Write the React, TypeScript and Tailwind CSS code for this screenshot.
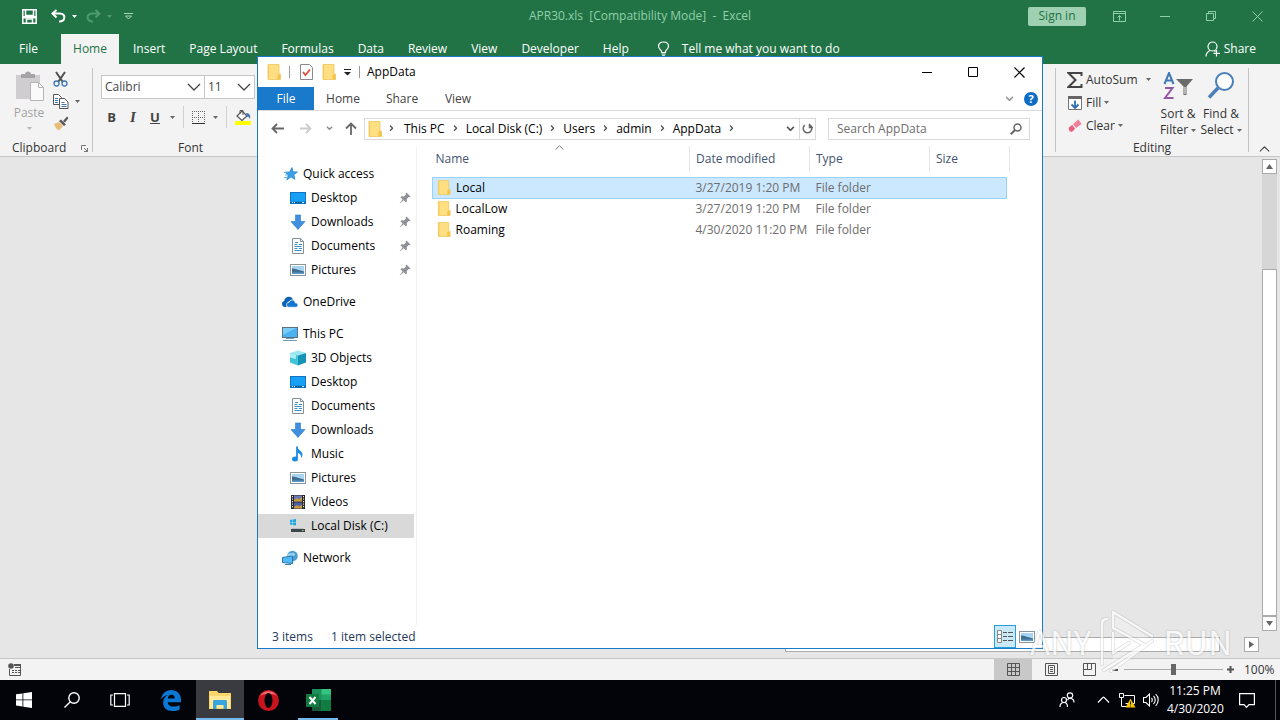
import type { ReactNode } from 'react';

type IconProps = { className?: string };

function Caret({ className = 'text-[#666]' }: IconProps) {
	return (
		<svg width="5" height="3" viewBox="0 0 5 3" className={`shrink-0 ${className}`} fill="currentColor">
			<path d="M0 0h5L2.5 3z" />
		</svg>
	);
}

function Chevron({ className = '' }: IconProps) {
	return (
		<svg viewBox="0 0 14 8" className={`shrink-0 ${className}`} fill="none" stroke="currentColor" strokeWidth="1.3">
			<path d="M1 1l6 6 6-6" />
		</svg>
	);
}

function SmallChevron({ className = '' }: IconProps) {
	return (
		<svg viewBox="0 0 8 5" className={`shrink-0 ${className}`} fill="none" stroke="currentColor" strokeWidth="1.5">
			<path d="M1 .8l3 3 3-3" />
		</svg>
	);
}

function FolderIcon({ className = 'h-4 w-[14px]' }: IconProps) {
	return (
		<svg viewBox="0 0 14 16" className={`shrink-0 ${className}`}>
			<path d="M1 .5h11V10h1.5v5.5H1z" fill="#ffdf82" />
			<path d="M1 .5h1.2v15H1z" fill="#f5cf62" />
			<path d="M10.5 10.5h2.8v5h-2.8z" fill="#f3c445" />
			<path d="M1 .5h11V10h1.5v5.5H1z" fill="none" stroke="#efc75c" strokeWidth=".8" />
		</svg>
	);
}

function StarIcon() {
	return (
		<svg width="16" height="16" viewBox="0 0 16 16">
			<path d="M10 1.5l1 4.3 4.5.2-3.6 2.6 1 4.7L9 10.900l-4.200 3 1.500-4.900L3 6.200l4.500-.2z" fill="#3aa0e8" stroke="#1c7fd0" strokeWidth=".7" />
			<path d="M2 6.5h3M3 9h3M2 11.5h4" stroke="#57b5ef" />
		</svg>
	);
}

function DesktopIcon() {
	return (
		<svg width="16" height="16" viewBox="0 0 16 16">
			<rect x=".5" y="2.5" width="15" height="11" fill="#18a0f5" stroke="#1474c4" />
			<path d="M1 12.5h14" stroke="#0d5c9e" strokeWidth="1.4" />
			<path d="M2 12.5h1M4 12.5h1M12 12.5h2" stroke="#cfeaff" />
		</svg>
	);
}

function DownloadIcon() {
	return (
		<svg width="16" height="16" viewBox="0 0 16 16">
			<path d="M5.5 1h5v6.5H15l-7 8-7-8h4.5z" fill="#3d8fe0" stroke="#2b75c4" strokeWidth=".6" />
		</svg>
	);
}

function DocumentIcon() {
	return (
		<svg width="16" height="16" viewBox="0 0 16 16">
			<path d="M2.5.5h8l3 3v12h-11z" fill="#fff" stroke="#85909b" />
			<path d="M10.5.5v3h3" fill="none" stroke="#85909b" />
			<path d="M4.5 6.5h3M4.5 8.5h7M4.5 10.5h3M9 10.5h3M4.5 12.5h7M5 4.5h3M9 6.5h3" stroke="#3b8fd0" />
		</svg>
	);
}

function PictureIcon() {
	return (
		<svg width="16" height="16" viewBox="0 0 16 16" className="shrink-0">
			<rect x=".5" y="2.5" width="15" height="11" fill="#fff" stroke="#8b949d" />
			<rect x="2" y="4" width="12" height="8" fill="#a9d3f2" />
			<path d="M2 6.5c3 0 5 1 12 3V12H2z" fill="#3e6f8f" />
			<path d="M2 10.5h12V12H2z" fill="#5e99c9" />
		</svg>
	);
}

function CloudIcon() {
	return (
		<svg width="16" height="16" viewBox="0 0 16 16">
			<path d="M0 9.8C0 8 1.2 7.200 2.300 7.100 2.300 4.400 4.600 2.800 7 2.800c2 0 3.500 1.200 4 2.700L6 8l-1.500 5H3c-2 0-3-1.500-3-3.200z" fill="#0b63b6" />
			<path d="M4.500 10.700c0-1.700 1.400-2.600 2.600-2.500C8 6 10 5.500 11.300 6.100c1.400.6 1.900 1.900 1.900 2.700 1.700 0 2.800 1 2.800 2.200 0 1.300-1 2.300-2.300 2.300H7c-1.500 0-2.500-1.100-2.500-2.600z" fill="#1277d0" stroke="#fff" strokeWidth=".8" />
		</svg>
	);
}

function ComputerIcon() {
	return (
		<svg width="16" height="16" viewBox="0 0 16 16">
			<rect x=".5" y="1.5" width="15" height="10" fill="#4ab2f1" stroke="#5a7184" />
			<path d="M1 2h13L1 9z" fill="#79cbf8" />
			<path d="M4 12.5h8M1 14.5h14" stroke="#6e98b6" />
		</svg>
	);
}

function CubeIcon() {
	return (
		<svg width="16" height="16" viewBox="0 0 16 16">
			<path d="M0 3L8 .5 16 3 8 5.5z" fill="#9be8f1" />
			<path d="M0 3l8 2.5v10l-8-3z" fill="#43c3d8" />
			<path d="M8 5.5L16 3v9.500l-8 3z" fill="#1593b5" />
			<path d="M0 3l6 2v4L0 7.5z" fill="#a6edf4" />
		</svg>
	);
}

function MusicIcon() {
	return (
		<svg width="16" height="16" viewBox="0 0 16 16">
			<path d="M7 .5v12" stroke="#1d8be0" strokeWidth="1.8" />
			<path d="M7 .5c.5 3.5 6 4.5 5.5 8.5-.2 1.700-1 2.500-1.500 3 .5-3.500-1.500-4.500-4-5.500z" fill="#1d8be0" />
			<ellipse cx="5" cy="13" rx="3" ry="2.5" fill="#1d8be0" />
		</svg>
	);
}

function VideoIcon() {
	return (
		<svg width="16" height="16" viewBox="0 0 16 16">
			<rect x="1" y="1" width="14" height="14" fill="#2b2b2b" />
			<rect x="4" y="1.5" width="8" height="6" fill="#6b79b8" />
			<rect x="4" y="8.5" width="8" height="6" fill="#4d5fa8" />
			<path d="M4 6l3-2 2 1.5L12 3v4.500H4zM4 13l3-2 2 1.500 3-2v4H4z" fill="#c59a3a" />
			<path d="M2.500 2v12M13.500 2v12" stroke="#e8e8e8" strokeDasharray="1.2 1.3" />
		</svg>
	);
}

function DriveIcon() {
	return (
		<svg width="16" height="16" viewBox="0 0 16 16">
			<path d="M0 2l2.500-.4V4H0zM3 1.500L6 1v3H3zM0 4.500h2.500v2.400L0 6.500zM3 4.500h3v3L3 7z" fill="#19a9e0" />
			<path d="M2 10h11l1.500 1.500H1z" fill="#b9bec3" />
			<rect x="1" y="11" width="14" height="3" fill="#3f4549" />
			<rect x="12" y="12" width="1.5" height="1" fill="#62e06f" />
		</svg>
	);
}

function NetworkIcon() {
	return (
		<svg width="16" height="16" viewBox="0 0 16 16">
			<circle cx="10.5" cy="6" r="5.3" fill="#4f9bd0" />
			<path d="M7 3c2 1 3-1 5 0s1 3-1 3-2 3-4 2-2-4 0-5z" fill="#8fd0ec" />
			<path d="M.5 7.5l10-1.500v7.500l-10-1z" fill="#53b9f6" stroke="#2877b3" />
			<path d="M3 14.5h6" stroke="#3a80b0" />
		</svg>
	);
}

function PinIcon() {
	return (
		<svg width="12" height="12" viewBox="0 0 12 12" className="shrink-0" fill="#8d9297">
			<path d="M7.500 .5l4 4-1 .8-.8-.3L7.800 7l.1 2.500-.9.9-2.200-2.200L1 11.200l-.3-.3 3-3.500-2.200-2.200.9-.9 2.500.1 2-1.900-.3-.8z" />
		</svg>
	);
}

const excelTabs = ['Insert', 'Page Layout', 'Formulas', 'Data', 'Review', 'View', 'Developer', 'Help'];

const crumbs = ['This PC', 'Local Disk (C:)', 'Users', 'admin', 'AppData'];

const folders = [
	{ name: 'Local', date: '3/27/2019 1:20 PM', selected: true },
	{ name: 'LocalLow', date: '3/27/2019 1:20 PM', selected: false },
	{ name: 'Roaming', date: '4/30/2020 11:20 PM', selected: false },
];

type NavItem = { label: string; icon: ReactNode; pinned?: boolean; selected?: boolean };

const navGroups: { root: NavItem; items: NavItem[] }[] = [
	{
		root: { label: 'Quick access', icon: <StarIcon /> },
		items: [
			{ label: 'Desktop', icon: <DesktopIcon />, pinned: true },
			{ label: 'Downloads', icon: <DownloadIcon />, pinned: true },
			{ label: 'Documents', icon: <DocumentIcon />, pinned: true },
			{ label: 'Pictures', icon: <PictureIcon />, pinned: true },
		],
	},
	{ root: { label: 'OneDrive', icon: <CloudIcon /> }, items: [] },
	{
		root: { label: 'This PC', icon: <ComputerIcon /> },
		items: [
			{ label: '3D Objects', icon: <CubeIcon /> },
			{ label: 'Desktop', icon: <DesktopIcon /> },
			{ label: 'Documents', icon: <DocumentIcon /> },
			{ label: 'Downloads', icon: <DownloadIcon /> },
			{ label: 'Music', icon: <MusicIcon /> },
			{ label: 'Pictures', icon: <PictureIcon /> },
			{ label: 'Videos', icon: <VideoIcon /> },
			{ label: 'Local Disk (C:)', icon: <DriveIcon />, selected: true },
		],
	},
	{ root: { label: 'Network', icon: <NetworkIcon /> }, items: [] },
];

function ExcelTitleBar() {
	return (
		<header className="flex h-8 items-center text-[#8fd0a8]">
			<div className="flex flex-1 items-center text-white">
				<button aria-label="Save" className="ml-[22px]">
					<svg width="15" height="15" viewBox="0 0 15 15" fill="none" stroke="currentColor" strokeWidth="1.5">
						<path d="M.8.8h13.400v13.400H.8zM3.500 1v5.500h8V1M4.500 14v-4h6v4" />
						<path d="M1 7h13v2.500H1z" fill="currentColor" stroke="none" />
					</svg>
				</button>
				<button aria-label="Undo" className="ml-[14px] flex items-center gap-[6px]">
					<svg width="15" height="14" viewBox="0 0 15 14" fill="none" stroke="currentColor" strokeWidth="2">
						<path d="M5.500 1l-4 3.500 4 4M1.500 4.500H9c6 0 6 8-1 8" />
					</svg>
					<Caret className="text-white" />
				</button>
				<button aria-label="Redo" className="ml-[9px] flex items-center gap-[6px] text-[#4f9a70]">
					<svg width="15" height="14" viewBox="0 0 15 14" fill="none" stroke="currentColor" strokeWidth="2">
						<path d="M9.500 1l4 3.500-4 4M13.500 4.500H6c-6 0-6 8 1 8" />
					</svg>
					<Caret className="text-[#4f9a70]" />
				</button>
				<button aria-label="Customize Quick Access Toolbar" className="ml-3">
					<svg width="9" height="7" viewBox="0 0 9 7" fill="none" stroke="#a7d5b8">
						<path d="M0 .5h9M1.500 3l3 3 3-3z" />
					</svg>
				</button>
			</div>
			<h1 className="whitespace-pre">APR30.xls  [Compatibility Mode]  -  Excel</h1>
			<div className="flex flex-1 items-center justify-end">
				<button className="mr-[10px] h-[19px] w-[58px] rounded-xs bg-[#9fd0b1] text-[#217346]">Sign in</button>
				<button aria-label="Ribbon Display Options" className="grid h-8 w-[46px] place-items-center">
					<svg width="13" height="11" viewBox="0 0 13 11" fill="none" stroke="currentColor">
						<path d="M.5.5h12v10H.5zM.5 2.500h12M6.500 9.500v-5M4.500 6.500l2-2 2 2" />
					</svg>
				</button>
				<button aria-label="Minimize Excel" className="grid h-8 w-[46px] place-items-center">
					<svg width="10" height="1" viewBox="0 0 10 1"><path d="M0 0h10v1H0z" fill="currentColor" /></svg>
				</button>
				<button aria-label="Restore Excel" className="grid h-8 w-[46px] place-items-center">
					<svg width="10" height="10" viewBox="0 0 10 10" fill="none" stroke="currentColor">
						<path d="M.5 2.500h7v7h-7zM2.500 2.500v-2h7v7h-2" />
					</svg>
				</button>
				<button aria-label="Close Excel" className="grid h-8 w-[46px] place-items-center">
					<svg width="11" height="11" viewBox="0 0 11 11" stroke="currentColor"><path d="M.5.5l10 10M10.500.5l-10 10" /></svg>
				</button>
			</div>
		</header>
	);
}

function ExcelTabs() {
	return (
		<nav className="flex h-8 items-end text-white *:h-[30px]">
			<button className="w-[61px] pr-1">File</button>
			<button className="mr-[2px] w-[58px] bg-[#f3f3f3] text-[#217346]">Home</button>
			{excelTabs.map((tab) => (
				<button key={tab} className="px-3">{tab}</button>
			))}
			<button className="ml-4 flex items-center gap-3">
				<svg width="13" height="16" viewBox="0 0 13 16" fill="none" stroke="currentColor" strokeWidth="1.2">
					<path d="M4.500 11.500V10c-1.500-1.500-3-2.500-3-4.800C1.500 2.500 3.700 1 6.500 1s5 1.500 5 4.200c0 2.300-1.500 3.300-3 4.800v1.500zM4.500 13h4M5 14.800h3" />
				</svg>
				Tell me what you want to do
			</button>
			<button className="ml-auto flex items-center gap-[3px] pr-6">
				<svg width="16" height="16" viewBox="0 0 16 16" fill="none" stroke="currentColor" strokeWidth="1.2">
					<circle cx="7.5" cy="5.5" r="4.5" />
					<path d="M1 15.500c0-3.500 2-5 4-6M9 9.500c1 .5 1.500 1 1.500 1M11.500 9v6.500M8.500 12.300h6.500" />
				</svg>
				Share
			</button>
		</nav>
	);
}

function ClipboardGroup() {
	return (
		<section className="flex w-[93px] flex-col border-r border-[#c3c3c3]">
			<div className="flex flex-1 gap-[7px] pl-3">
				<button className="flex w-[34px] flex-col items-center justify-start pt-[3px] text-[#a3a3a3]">
					<svg width="30" height="30" viewBox="0 0 30 30" className="shrink-0">
						<path d="M2 4h24v24H2z" fill="#cfcdd0" />
						<path d="M7 3h4c0-3.500 6-3.500 6 0h4v4H7z" fill="#a5a3a6" />
						<path d="M16.500 11.500h8l5 5v13h-13z" fill="#fafafa" stroke="#b5b5b5" />
						<path d="M24.500 11.500v5h5" fill="none" stroke="#b5b5b5" />
					</svg>
					<span className="mt-1 leading-4">Paste</span>
					<Caret className="mt-[6px] text-[#b5b5b5]" />
				</button>
				<div className="flex flex-col">
					<button aria-label="Cut" className="h-[22px]">
						<svg width="15" height="16" viewBox="0 0 15 16" fill="none">
							<path d="M3 1l6.500 9.500M12 1L5.500 10.500" stroke="#505050" strokeWidth="2" />
							<circle cx="3.5" cy="12.5" r="2.5" stroke="#3f78b5" strokeWidth="1.3" />
							<circle cx="11.5" cy="12.5" r="2.5" stroke="#3f78b5" strokeWidth="1.3" />
						</svg>
					</button>
					<button aria-label="Copy" className="flex h-[22px] items-center gap-[6px]">
						<svg width="16" height="15" viewBox="0 0 16 15" fill="#fff" stroke="#555">
							<path d="M.5.5h5l3 3v7h-8z" />
							<path d="M6.500 4.500h5L15 8v6.500H6.500z" />
							<path d="M2 4.500h3M2 6.500h3M2 8.500h3M8.500 8.500h3M8.500 10.500h5M8.500 12.500h5" stroke="#3f78b5" />
						</svg>
						<Caret />
					</button>
					<button aria-label="Format Painter" className="h-[23px]">
						<svg width="16" height="15" viewBox="0 0 16 15">
							<path d="M1 8l5-2 4 4-4 4.500C4 13.500 2 11.500 1 8z" fill="#e8bd7a" />
							<path d="M6 5l2-1.500 5 5L11 10zM10 5l4-4.500L15.500 2 12 6.500z" fill="#595959" />
						</svg>
					</button>
				</div>
			</div>
			<div className="flex h-2 items-center justify-between pr-1 pl-3">
				Clipboard
				<svg width="7" height="7" viewBox="0 0 7 7" fill="none" stroke="#777"><path d="M.5 5V.5H5M3 3l3.500 3.500M6.500 3v3.500H3" /></svg>
			</div>
		</section>
	);
}

function FontGroup() {
	return (
		<section className="flex w-[196px] flex-col border-r border-[#c3c3c3] pl-2">
			<div className="flex pt-[7px]">
				<label className="relative">
					<select aria-label="Font" className="h-6 w-[104px] appearance-none border border-[#c6c6c6] bg-white pl-[3px] text-[#444]">
						<option>Calibri</option>
					</select>
					<Chevron className="pointer-events-none absolute top-2 right-1 w-[14px] text-[#444]" />
				</label>
				<label className="relative -ml-px">
					<select aria-label="Font size" className="h-6 w-[51px] appearance-none border border-[#c6c6c6] bg-white pl-[3px] text-[#444]">
						<option>11</option>
					</select>
					<Chevron className="pointer-events-none absolute top-2 right-1 w-[14px] text-[#444]" />
				</label>
			</div>
			<div className="flex h-9 items-center text-[#444]">
				<button className="w-[21px] text-[13px] font-bold">B</button>
				<button className="w-[22px] font-['Liberation_Serif',serif] text-[15px] font-bold italic">I</button>
				<button className="w-[22px] text-[13px] font-bold underline">U</button>
				<Caret className="ml-1 text-[#666]" />
				<span className="mx-2 h-[22px] w-px bg-[#d0d0d0]" />
				<button aria-label="Borders" className="flex items-center gap-2">
					<svg width="13" height="13" viewBox="0 0 13 13" fill="none" stroke="#666">
						<path d="M.5 0v12M6.500 0v12M12.500 0v12M0 .5h13M0 6.500h13" strokeDasharray="1 1" />
						<path d="M0 12.500h13" stroke="#333" />
					</svg>
					<Caret />
				</button>
				<span className="mx-2 h-[22px] w-px bg-[#d0d0d0]" />
				<button aria-label="Fill Color">
					<svg width="16" height="16" viewBox="0 0 16 16" fill="none">
						<path d="M7 2l5 5-5 4.500L2 7z" fill="#fff" stroke="#555" strokeWidth="1.2" />
						<path d="M5 5V1.500h3V6" stroke="#555" />
						<path d="M11 4c3 0 5 2 4 6-1-2-2-2.500-3-2.500z" fill="#3f78b5" />
						<path d="M0 12h16v4H0z" fill="#ffff00" />
					</svg>
				</button>
			</div>
			<div className="mt-auto flex h-2 items-center justify-center pr-2">Font</div>
		</section>
	);
}

function EditingGroup() {
	return (
		<section className="ml-auto flex w-[194px] flex-col border-x border-[#c3c3c3]">
			<div className="flex flex-1 pl-[11px] text-[#333]">
				<div className="mr-[6px] flex w-[84px] flex-col">
					<button className="flex h-[23px] items-center gap-[3px]">
						<svg width="16" height="16" viewBox="0 0 16 16" fill="none" stroke="#444" strokeWidth="2">
							<path d="M14.500 4V1H1.500l7 7-7 7h13v-3" />
						</svg>
						AutoSum
						<Caret className="ml-auto text-[#666]" />
					</button>
					<button className="flex h-[23px] items-center gap-[3px]">
						<svg width="16" height="16" viewBox="0 0 16 16" fill="none">
							<path d="M1.500 1.500h13v13h-13z" fill="#fff" stroke="#777" />
							<path d="M1 1h14v3H1z" fill="#666" />
							<path d="M8 5.500v7M4.500 9.500L8 13l3.500-3.500" stroke="#2f6fb5" strokeWidth="1.8" />
						</svg>
						Fill
						<Caret />
					</button>
					<button className="flex h-[23px] items-center gap-[3px]">
						<svg width="16" height="14" viewBox="0 0 16 14">
							<path d="M6 5l5.500-4.500 3 4.500-5.500 4z" fill="#f07f97" />
							<path d="M1.500 9l3.700-3.200 2.900 4L5 13l-2.500-.7z" fill="#e8607f" />
						</svg>
						Clear
						<Caret />
					</button>
				</div>
				<button className="flex w-[42px] flex-col items-center justify-start pt-1 whitespace-nowrap">
					<svg width="30" height="28" viewBox="0 0 30 28" fill="none" className="shrink-0">
						<path d="M1.500 12L6 1l4.500 11M3 8.500h6" stroke="#3f78b5" strokeWidth="2" />
						<path d="M2 16h7.500L2 26h8.500" stroke="#9457a8" strokeWidth="2" />
						<path d="M13 7h17l-6.500 7.500V23h-3v-8.500z" fill="#6a6a6a" />
						<path d="M22 15v7" stroke="#fff" />
					</svg>
					<span className="mt-[6px] leading-4">Sort &amp;</span>
					<span className="flex items-center gap-[3px] leading-4">Filter <Caret /></span>
				</button>
				<button className="flex w-11 flex-col items-center justify-start pt-1 whitespace-nowrap">
					<svg width="28" height="28" viewBox="0 0 28 28" fill="none" className="shrink-0">
						<circle cx="17.5" cy="9.5" r="8.5" fill="#fff" stroke="#4a7fb8" strokeWidth="2" />
						<path d="M11 16l-9 9.500" stroke="#4a7fb8" strokeWidth="3.5" />
					</svg>
					<span className="mt-[6px] leading-4">Find &amp;</span>
					<span className="flex items-center gap-[3px] leading-4">Select <Caret /></span>
				</button>
			</div>
			<div className="flex h-2 items-center justify-center">Editing</div>
		</section>
	);
}

function ScrollButton({ label, className }: { label: string; className: string }) {
	return (
		<button aria-label={label} className="grid h-[15px] w-[15px] shrink-0 place-items-center border border-[#ababab] bg-white">
			<svg width="7" height="5" viewBox="0 0 7 5" className={className} fill="#666"><path d="M0 5h7L3.5 0z" /></svg>
		</button>
	);
}

function Workbook() {
	return (
		<div className="flex flex-1 flex-col bg-[#e6e6e6] pt-[2px]">
			<div className="mr-[3px] flex w-[15px] flex-1 flex-col self-end bg-[#d6d6d6]">
				<ScrollButton label="Scroll up" className="" />
				<div className="mt-[95px] flex-1 border border-[#ababab] bg-white" />
				<ScrollButton label="Scroll down" className="rotate-180" />
			</div>
			<div className="mt-[6px] mr-[21px] mb-[6px] ml-[785px] flex">
				<div className="mr-6 h-[15px] flex-1 border border-[#ababab] bg-white" />
				<ScrollButton label="Scroll right" className="rotate-90" />
			</div>
		</div>
	);
}

function ExcelStatusBar() {
	return (
		<footer className="flex h-[22px] items-center border-t border-[#c6c6c6] bg-[#f3f3f3]">
			<button aria-label="Record macro" className="ml-2">
				<svg width="13" height="13" viewBox="0 0 13 13" fill="none" stroke="#555">
					<path d="M6 1.500h6.500v11h-11V6M7 4.500h5M4 7.500h2M7 7.500h2M10 7.500h2M4 9.500h2M7 9.500h2M10 9.500h2" />
					<path d="M6 1h7v2H6z" fill="#555" stroke="none" />
					<circle cx="3" cy="3" r="2.8" fill="#555" stroke="none" />
				</svg>
			</button>
			<div className="ml-auto flex h-full items-center text-[#555]">
				<button aria-label="Normal view" className="grid h-full w-[38px] place-items-center bg-[#c8c8c8]">
					<svg width="13" height="13" viewBox="0 0 13 13" fill="none" stroke="currentColor">
						<path d="M.5.5h12v12H.5zM4.500.5v12M8.500.5v12M.5 4.500h12M.5 8.500h12" />
					</svg>
				</button>
				<button aria-label="Page layout view" className="grid h-full w-[38px] place-items-center">
					<svg width="13" height="13" viewBox="0 0 13 13" fill="none" stroke="currentColor">
						<path d="M.5.5h12v12H.5zM3.500 2.500h6v8h-6zM5 4.500h3M5 6.500h3M5 8.500h3" />
					</svg>
				</button>
				<button aria-label="Page break view" className="grid h-full w-[38px] place-items-center">
					<svg width="13" height="13" viewBox="0 0 13 13" fill="none" stroke="currentColor">
						<path d="M.5.5h12v12H.5zM4.500.5v6M8.500.5v6M.5 6.500h8" />
					</svg>
				</button>
				<button aria-label="Zoom out" className="ml-1 w-3">
					<svg width="6" height="2" viewBox="0 0 6 2"><path d="M0 0h6v2H0z" fill="currentColor" /></svg>
				</button>
				<input
					type="range"
					aria-label="Zoom level"
					min={10}
					max={400}
					defaultValue={203}
					className="h-3 w-[99px] appearance-none bg-[linear-gradient(#aaa,#aaa)] bg-[length:100%_1px] bg-center bg-no-repeat [&::-webkit-slider-thumb]:h-[11px] [&::-webkit-slider-thumb]:w-[5px] [&::-webkit-slider-thumb]:appearance-none [&::-webkit-slider-thumb]:bg-[#666]"
				/>
				<button aria-label="Zoom in" className="mx-1">
					<svg width="7" height="7" viewBox="0 0 7 7" stroke="currentColor" strokeWidth="2"><path d="M0 3.500h7M3.500 0v7" /></svg>
				</button>
				<span className="w-[42px] pl-[6px] text-[#333]">100%</span>
			</div>
		</footer>
	);
}

function NavRow({ item, nested }: { item: NavItem; nested?: boolean }) {
	return (
		<button
			className={`flex h-6 w-[156px] items-center gap-[5px] pr-[3px] text-left ${nested ? 'pl-8' : 'pl-6'} ${item.selected ? 'bg-[#d9d9d9]' : ''}`}
		>
			{item.icon}
			<span className="flex-1">{item.label}</span>
			{item.pinned && <PinIcon />}
		</button>
	);
}

function FolderTable() {
	return (
		<table className="w-[577px] table-fixed border-collapse text-left">
			<colgroup>
				<col className="w-[257px]" />
				<col className="w-[120px]" />
				<col className="w-[120px]" />
				<col className="w-[77px]" />
				<col className="w-[3px]" />
			</colgroup>
			<thead className="text-[#44546f]">
				<tr className="h-[26px]">
					<th className="border-r border-[#e5e5e5] pl-[3px] font-normal">
						<span className="relative block">
							Name
							<Chevron className="absolute -top-[6px] left-[119px] w-[9px] rotate-180 text-[#555]" />
						</span>
					</th>
					<th className="border-r border-[#e5e5e5] pl-[6px] font-normal">Date modified</th>
					<th className="border-r border-[#e5e5e5] pl-[6px] font-normal">Type</th>
					<th colSpan={2} className="border-r border-[#e5e5e5] pl-[6px] font-normal">Size</th>
				</tr>
				<tr className="h-[5px]" />
			</thead>
			<tbody className="text-[#6d6d6d]">
				{folders.map((folder) => (
					<tr key={folder.name} className="h-[21px]">
						<td className={`p-0 pl-1 text-black ${folder.selected ? 'border-y border-l border-[#99d1ff] bg-[#cce8ff]' : ''}`}>
							<span className="flex items-center gap-[5px]">
								<FolderIcon className="h-[15px] w-[14px]" />
								{folder.name}
							</span>
						</td>
						<td className={`p-0 pl-[6px] ${folder.selected ? 'border-y border-[#99d1ff] bg-[#cce8ff]' : ''}`}>{folder.date}</td>
						<td className={`p-0 pl-[6px] ${folder.selected ? 'border-y border-[#99d1ff] bg-[#cce8ff]' : ''}`}>File folder</td>
						<td className={folder.selected ? 'border-y border-r border-[#99d1ff] bg-[#cce8ff]' : ''} />
					</tr>
				))}
			</tbody>
		</table>
	);
}

function ExplorerTitleBar() {
	return (
		<div className="flex h-[30px] items-center text-black">
			<FolderIcon className="ml-[9px] h-4 w-[14px]" />
			<span className="mx-2 h-3 w-px bg-[#999]" />
			<button aria-label="Properties" className="ml-[2px]">
				<svg width="13" height="16" viewBox="0 0 13 16" fill="none">
					<path d="M.5.5h9l3 3v12H.5z" fill="#fff" stroke="#8a8a8a" />
					<path d="M3 8l2.500 3L10 5.500" stroke="#e0513c" strokeWidth="1.8" />
				</svg>
			</button>
			<button aria-label="New folder" className="ml-[9px]">
				<FolderIcon />
			</button>
			<button aria-label="Customize toolbar" className="ml-2">
				<svg width="7" height="7" viewBox="0 0 7 7"><path d="M0 0h7v1H0zM0 3h7L3.500 6.500z" fill="#222" /></svg>
			</button>
			<span className="mr-[7px] ml-2 h-3 w-px bg-[#999]" />
			<h2>AppData</h2>
			<div className="ml-auto flex">
				<button aria-label="Minimize" className="grid h-7 w-[46px] place-items-center">
					<svg width="10" height="1" viewBox="0 0 10 1"><path d="M0 0h10v1H0z" /></svg>
				</button>
				<button aria-label="Maximize" className="grid h-7 w-[46px] place-items-center">
					<svg width="10" height="10" viewBox="0 0 10 10" fill="none" stroke="#000"><path d="M.5.5h9v9h-9z" /></svg>
				</button>
				<button aria-label="Close" className="grid h-7 w-[46px] place-items-center">
					<svg width="11" height="11" viewBox="0 0 11 11" stroke="#000" strokeWidth="1.2"><path d="M.5.5l10 10M10.500.5l-10 10" /></svg>
				</button>
			</div>
		</div>
	);
}

function AddressBar() {
	return (
		<div className="flex h-[35px] items-center pr-3 pl-[13px] text-black">
			<button aria-label="Back">
				<svg width="13" height="11" viewBox="0 0 13 11" fill="none" stroke="#666" strokeWidth="1.8"><path d="M13 5.500H1.500M6 1L1.500 5.500 6 10" /></svg>
			</button>
			<button aria-label="Forward" className="ml-4">
				<svg width="12" height="11" viewBox="0 0 12 11" fill="none" stroke="#ccc" strokeWidth="1.8"><path d="M0 5.500h10.500M6 1l4.500 4.500L6 10" /></svg>
			</button>
			<button aria-label="Recent locations" className="ml-[14px]">
				<SmallChevron className="w-[7px] text-[#888]" />
			</button>
			<button aria-label="Up" className="ml-3">
				<svg width="12" height="13" viewBox="0 0 12 13" fill="none" stroke="#666" strokeWidth="1.8"><path d="M6 13V1.500M1 6.500l5-5 5 5" /></svg>
			</button>
			<div className="ml-[7px] flex h-[22px] flex-1 items-center border border-[#d9d9d9] pl-[3px]">
				<FolderIcon />
				<SmallChevron className="mx-[6px] w-[7px] -rotate-90 text-[#555]" />
				{crumbs.map((crumb) => (
					<span key={crumb} className="flex items-center">
						<button className="px-[3px]">{crumb}</button>
						<SmallChevron className="mx-1 w-[7px] -rotate-90 text-[#555]" />
					</span>
				))}
				<button aria-label="Previous locations" className="ml-auto px-1">
					<SmallChevron className="w-[9px] text-[#555]" />
				</button>
				<button aria-label="Refresh" className="grid h-full w-4 place-items-center border-l border-[#d9d9d9]">
					<svg width="11" height="11" viewBox="0 0 11 11" fill="none" stroke="#666" strokeWidth="1.5">
						<path d="M8.200 2.200a4.300 4.300 0 1 1-5.400 0M7.500.8v3.700H11" />
					</svg>
				</button>
			</div>
			<label className="ml-3 flex h-[22px] w-[202px] items-center border border-[#d9d9d9] pr-[7px] pl-2">
				<input aria-label="Search AppData" placeholder="Search AppData" className="min-w-0 flex-1 bg-transparent outline-none placeholder:text-[#6d6d6d]" />
				<svg width="12" height="12" viewBox="0 0 12 12" fill="none" stroke="#666" strokeWidth="1.5">
					<circle cx="7.5" cy="4.5" r="3.5" />
					<path d="M5 7L.8 11.200" strokeWidth="2" />
				</svg>
			</label>
		</div>
	);
}

function ExplorerWindow() {
	return (
		<div className="absolute top-14 right-[237px] bottom-[71px] left-[257px] flex flex-col border border-[#1979ca] bg-white">
			<ExplorerTitleBar />
			<div className="flex h-6 items-center border-b border-[#dadbdc] text-[#444]">
				<button className="h-full w-14 bg-[#1979ca] text-white">File</button>
				<button className="w-[58px]">Home</button>
				<button className="w-[60px]">Share</button>
				<button className="w-[52px]">View</button>
				<button aria-label="Expand the ribbon" className="ml-auto">
					<SmallChevron className="w-[9px] text-[#999]" />
				</button>
				<button aria-label="Help" className="mr-1 ml-[10px] grid h-[14px] w-[14px] place-items-center rounded-full bg-[#0f6cc4] text-[11px] leading-none font-bold text-white">?</button>
			</div>
			<AddressBar />
			<div className="flex flex-1">
				<aside className="flex w-[159px] shrink-0 flex-col gap-2 border-r border-[#f2f2f2] pt-4 text-black">
					{navGroups.map((group) => (
						<div key={group.root.label}>
							<NavRow item={group.root} />
							{group.items.map((item) => (
								<NavRow key={item.label} item={item} nested />
							))}
						</div>
					))}
				</aside>
				<main className="pl-[15px]">
					<FolderTable />
				</main>
			</div>
			<footer className="flex h-[23px] items-center pl-[14px] text-[#1e395b]">
				<span className="w-[59px]">3 items</span>
				<span>1 item selected</span>
				<button aria-label="Details view" className="ml-auto grid h-full w-[22px] place-items-center border border-[#26a0da] bg-[#cbe8f6]">
					<svg width="16" height="13" viewBox="0 0 16 13" fill="none" stroke="#555">
						<path d="M.5.5h4v12h-4zM.5 4.500h4M.5 8.500h4" fill="#fff" stroke="#8a8a8a" />
						<path d="M6 2.500h4M11 2.500h5M6 6.500h4M11 6.500h5M6 10.500h4M11 10.500h5" />
					</svg>
				</button>
				<button aria-label="Large icons view" className="mr-[7px] ml-[3px]">
					<PictureIcon />
				</button>
			</footer>
		</div>
	);
}

function Watermark() {
	return (
		<div className="pointer-events-none absolute right-12 bottom-[47px] flex items-center gap-2 font-['Noto_Sans_CJK_SC',sans-serif] text-[33px] leading-none text-white opacity-70 [text-shadow:0_0_2px_#999]">
			<span>ANY</span>
			<svg width="56" height="64" viewBox="0 0 56 64" fill="none" strokeLinejoin="round" strokeLinecap="round">
				<path d="M14 3v20l28 8-28 14v16l40-29-8-6z" fill="#fff" fillOpacity=".4" />
				<path d="M14 3l39 24M14 3v16l30 16M8 10c-4 0-5 2-5 5v40M14 24v20l16-10M5 61l40-25M12 62l41-30" stroke="#aaa" strokeOpacity=".5" strokeWidth="4" />
				<path d="M14 3l39 24M14 3v16l30 16M8 10c-4 0-5 2-5 5v40M14 24v20l16-10M5 61l40-25M12 62l41-30" stroke="#fff" strokeWidth="2.5" />
			</svg>
			<span>RUN</span>
		</div>
	);
}

function Taskbar() {
	return (
		<footer className="flex h-10 items-center bg-[#02040a] text-white">
			<button aria-label="Start" className="grid h-10 w-12 place-items-center">
				<svg width="16" height="16" viewBox="0 0 16 16" fill="#fff"><path d="M0 2.300l6.500-.9v6.100H0zM7.300 1.300L16 0v7.500H7.300zM0 8.300h6.500v6.200L0 13.600zM7.300 8.300H16V16l-8.700-1.300z" /></svg>
			</button>
			<button aria-label="Search" className="grid h-10 w-12 place-items-center">
				<svg width="16" height="16" viewBox="0 0 16 16" fill="none" stroke="#fff" strokeWidth="1.4"><circle cx="10" cy="6" r="5.2" /><path d="M6.300 9.700L.5 15.500" /></svg>
			</button>
			<button aria-label="Task view" className="grid h-10 w-12 place-items-center">
				<svg width="20" height="14" viewBox="0 0 20 14" fill="none" stroke="#fff" strokeWidth="1.2"><path d="M4.500.6h11v12.800h-11zM3 2H.8v10H3M17 2h2.200v10H17" /></svg>
			</button>
			<button aria-label="Edge" className="mr-1 grid h-10 w-12 place-items-center pl-[6px]">
				<svg width="20" height="21" viewBox="0 0 20 21">
					<path d="M0 9.500C.8 3.500 5 0 10.200 0 16 0 20 4 20 9.800v2.400H6.700c.3 3 2.700 4.400 5.900 4.400 2.300 0 4.300-.6 6-1.700v4.500c-2 1-4.200 1.600-7 1.600-6 0-9.500-3.500-9.500-8.500 0-3.300 1.900-6 4.700-7.500C4 5.500 1.500 6.800 0 9.500zm6.800-1h7c0-2.400-1.100-3.800-3.300-3.800S7.100 6.200 6.800 8.500z" fill="#0a78d4" />
				</svg>
			</button>
			<button aria-label="File Explorer" className="grid h-10 w-12 place-items-center border-b-2 border-[#76b9ed] bg-[#3a3b40] pt-0.5">
				<svg width="22" height="18" viewBox="0 0 22 18">
					<path d="M0 0h8l1.500 2H22v16H0z" fill="#f9d66b" />
					<path d="M1 5h20v12H1z" fill="#ffe896" />
					<path d="M4 10.500C4 9.500 4.500 9 5.500 9h11c1 0 1.500.5 1.500 1.500V18h-3.500v-4h-7v4H4z" fill="#38a5e0" />
				</svg>
			</button>
			<button aria-label="Opera" className="grid h-10 w-12 place-items-center">
				<svg width="21" height="21" viewBox="0 0 21 21">
					<circle cx="10.5" cy="10.5" r="10.5" fill="#c9141e" />
					<path d="M2 6a10 10 0 0 1 17 0c-4-3-13-3-17 0z" fill="#ef6b70" />
					<ellipse cx="10.5" cy="10.5" rx="4" ry="7.5" fill="#02040a" />
				</svg>
			</button>
			<button aria-label="Excel" className="ml-[6px] grid h-10 w-10 place-items-center border-b-2 border-[#76b9ed] pt-0.5">
				<svg width="25" height="22" viewBox="0 0 25 22">
					<path d="M6 0h19v22H6z" fill="#21a366" />
					<path d="M6 0h9.500v11H6z" fill="#1c9159" />
					<path d="M15.500 0H25v5.500h-9.500z" fill="#33c481" />
					<path d="M6 11h9.500v11H6z" fill="#185c37" />
					<path d="M15.500 11H25v11h-9.500z" fill="#107c41" />
					<rect y="5" width="13" height="13" rx="1" fill="#107c41" />
					<path d="M3.500 8l6 7M9.500 8l-6 7" stroke="#fff" strokeWidth="2" />
				</svg>
			</button>
			<div className="ml-auto flex items-center">
				<button aria-label="People">
					<svg width="16" height="16" viewBox="0 0 16 16" fill="none" stroke="#fff" strokeWidth="1.2">
						<circle cx="11" cy="3.5" r="2.7" />
						<circle cx="5" cy="8" r="2.5" />
						<path d="M1 15c0-3 1.500-4.500 4-4.500S8.500 12 8.500 15M8.500 8c1-1.500 2-2 3-1.700 2.300.2 3.500 1.700 3.500 4.200" />
					</svg>
				</button>
				<button aria-label="Show hidden icons" className="ml-[22px]">
					<Chevron className="w-[13px] rotate-180" />
				</button>
				<button aria-label="Network" className="ml-[9px]">
					<svg width="17" height="15" viewBox="0 0 17 15" fill="none" stroke="#fff">
						<path d="M5.500 2.500h10v8h-9M.5.500h4v4h-4zM2.500 4.500v9h6" />
						<path d="M11.500 5.500l5 9h-10z" fill="#f7c600" stroke="none" />
						<path d="M11.500 8.500v3M11.500 12.500v1" stroke="#222" />
					</svg>
				</button>
				<button aria-label="Volume" className="ml-[7px]">
					<svg width="17" height="14" viewBox="0 0 17 14" fill="none" stroke="#fff" strokeWidth="1.1">
						<path d="M.5 4.500H3L6.500 1v12L3 9.500H.5zM8.500 5c1 1 1 3 0 4M10.500 3c2.300 2 2.300 6 0 8M12.700 1.200c3.300 3 3.300 8.600 0 11.600" />
					</svg>
				</button>
				<div className="ml-[7px] w-[56px] text-center leading-[18px] whitespace-nowrap">
					<p>11:25 PM</p>
					<p>4/30/2020</p>
				</div>
				<button aria-label="Notifications" className="ml-4">
					<svg width="16" height="17" viewBox="0 0 16 17" fill="none" stroke="#fff" strokeWidth="1.2"><path d="M.6 1.600h14.800v11H10l-2.500 2.800L5 12.600H.6z" /></svg>
				</button>
				<span className="mr-1 ml-5 h-10 w-px bg-[#55575c]" />
			</div>
		</footer>
	);
}

export default function App() {
	return (
		<div className="relative flex min-h-screen flex-col overflow-hidden bg-[#217346] font-['Open_Sans',sans-serif] text-[12px] leading-4 text-[#333]">
			<ExcelTitleBar />
			<ExcelTabs />
			<div className="flex h-[93px] border-b border-[#c6c6c6] bg-[#f3f3f3] pt-1 pb-1">
				<ClipboardGroup />
				<FontGroup />
				<EditingGroup />
				<button aria-label="Collapse the Ribbon" className="flex w-[31px] items-end justify-center">
					<Chevron className="w-[11px] rotate-180" />
				</button>
			</div>
			<Workbook />
			<ExcelStatusBar />
			<Taskbar />
			<ExplorerWindow />
			<Watermark />
		</div>
	);
}
